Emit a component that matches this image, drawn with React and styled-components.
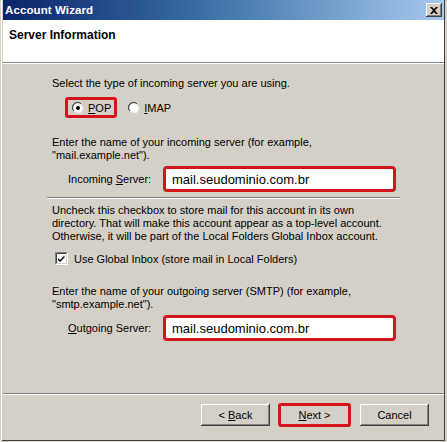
import React from 'react';
import styled, { createGlobalStyle } from 'styled-components';

const Global = createGlobalStyle`
  html, body { margin: 0; padding: 0; background: #d4d0c8; }
  body { font-family: "Liberation Sans", Arial, sans-serif; font-size: 11px; color: #000; }
  * { box-sizing: border-box; }
`;

const RED = '#d3151b';

const Window = styled.div`
  width: 447px;
  height: 442px;
  background: #d4d0c8;
  border-left: 1px solid #d4d0c8;
  border-right: 2px solid #d4d0c8;
  border-bottom: 1px solid #d4d0c8;
  padding-left: 2px;
  padding-right: 1px;
  padding-bottom: 1px;
  box-shadow: inset 1px 0 0 #ffffff, inset -1px -1px 0 #404040;
  display: flex;
  flex-direction: column;
`;

const TitleBar = styled.div`
  height: 20px;
  flex: none;
  background: linear-gradient(to right, #0a246a 0%, #3a6ea5 45%, #a6caf0 100%);
  display: flex;
  align-items: center;
  justify-content: space-between;
  padding: 0 2px 0 2px;
`;

const TitleText = styled.span`
  color: #fff;
  font-weight: bold;
  font-size: 11.5px;
  letter-spacing: 0.1px;
`;

const CloseButton = styled.div`
  width: 16px;
  height: 14px;
  background: #d4d0c8;
  box-shadow: inset -1px -1px 0 #404040, inset 1px 1px 0 #ffffff, inset -2px -2px 0 #808080;
  display: flex;
  align-items: center;
  justify-content: center;
`;

const Header = styled.div`
  height: 43px;
  flex: none;
  background: #fff;
  border-bottom: 1px solid #808080;
  box-shadow: 0 1px 0 #ffffff;
  padding: 8px 0 0 6px;
`;

const HeaderTitle = styled.div`
  font-weight: bold;
  font-size: 12px;
`;

const Body = styled.div`
  flex: 1;
  display: flex;
  flex-direction: column;
  padding: 14px 0 0 44px;
  width: 397px;
`;

const Para = styled.div`
  line-height: 13px;
  padding-left: 5px;
  margin-top: ${p => p.$mt || 0}px;
  white-space: pre-line;
`;

const RadioRow = styled.div`
  display: flex;
  align-items: center;
  height: 21px;
  margin-top: 7px;
  margin-left: 21px;
`;

const RadioItem = styled.label`
  display: flex;
  align-items: center;
  gap: 4px;
`;

const Highlight = styled.div`
  display: flex;
  align-items: center;
  height: 21px;
  padding: 0 3px 0 4px;
  margin-left: -3px;
  margin-right: 11px;
  border: 3px solid ${RED};
  border-radius: 3px;
`;

const FieldRow = styled.div`
  display: flex;
  align-items: center;
  margin-top: 4px;
  padding-left: 21px;
  height: 26px;
`;

const FieldLabel = styled.span`
  width: 95px;
  flex: none;
`;

const InputBox = styled.div`
  width: 233px;
  height: 26px;
  border: 3px solid ${RED};
  border-radius: 4px;
  background: #fff;
  display: flex;
  align-items: center;
  padding-left: 6px;
  font-size: 13px;
`;

const Separator = styled.div`
  margin-top: ${p => p.$mt || 0}px;
  height: 2px;
  border-top: 1px solid #808080;
  border-bottom: 1px solid #ffffff;
  width: ${p => (p.$w ? p.$w + 'px' : 'auto')};
`;

const CheckRow = styled.div`
  display: flex;
  align-items: center;
  gap: 6px;
  margin-top: 9px;
  padding-left: 8px;
  height: 13px;
`;

const Spacer = styled.div`
  flex: 1;
`;

const Footer = styled.div`
  flex: none;
  height: 47px;
  display: flex;
  flex-direction: column;
`;

const ButtonRow = styled.div`
  display: flex;
  justify-content: flex-end;
  align-items: center;
  padding: 8px 15px 0 0;
  gap: 8px;
`;

const Button = styled.div`
  width: ${p => (p.$hl ? 73 : 69)}px;
  height: ${p => (p.$hl ? 24 : 22)}px;
  margin-left: ${p => p.$ml || 0}px;
  background: #d4d0c8;
  display: flex;
  align-items: center;
  justify-content: center;
  white-space: pre;
  ${p => (p.$hl
    ? `border: 3px solid ${RED}; border-radius: 3px;`
    : `box-shadow: inset -1px -1px 0 #404040, inset 1px 1px 0 #ffffff, inset -2px -2px 0 #808080;`)}
`;

const Radio = ({ checked }) => (
  <svg width="12" height="12" viewBox="0 0 12 12">
    <path d="M1 8 A5.5 5.5 0 0 1 8 1" stroke="#808080" fill="none" />
    <path d="M1.8 9 A4.6 4.6 0 0 1 9 1.8" stroke="#404040" fill="none" />
    <circle cx="6" cy="6" r="4.5" fill="#fff" />
    <path d="M11 4 A5.5 5.5 0 0 1 4 11" stroke="#ffffff" fill="none" />
    <path d="M10.2 3 A4.6 4.6 0 0 1 3 10.2" stroke="#d4d0c8" fill="none" />
    {checked && <circle cx="6" cy="6" r="2" fill="#000" />}
  </svg>
);

const CheckBox = () => (
  <svg width="13" height="13" viewBox="0 0 13 13">
    <rect x="0" y="0" width="13" height="13" fill="#ffffff" />
    <path d="M0.5 12.5 V0.5 H12.5" stroke="#808080" fill="none" />
    <path d="M1.5 11.5 V1.5 H11.5" stroke="#404040" fill="none" />
    <path d="M1.5 11.5 H11.5 V1.5" stroke="#d4d0c8" fill="none" />
    <path d="M3 6 L5 8 L9.5 3.5 V5.5 L5 10 L3 8 Z" fill="#000" />
  </svg>
);

export default function App() {
  return (
    <>
      <Global />
      <Window>
        <TitleBar>
          <TitleText>Account Wizard</TitleText>
          <CloseButton>
            <svg width="8" height="7" viewBox="0 0 8 7">
              <path d="M0 0 H2 L4 2 L6 0 H8 L5 3.5 L8 7 H6 L4 5 L2 7 H0 L3 3.5 Z" fill="#000" />
            </svg>
          </CloseButton>
        </TitleBar>
        <Header>
          <HeaderTitle>Server Information</HeaderTitle>
        </Header>
        <Body>
          <Para>Select the type of incoming server you are using.</Para>
          <RadioRow>
            <Highlight>
              <RadioItem>
                <Radio checked />
                <span><u>P</u>OP</span>
              </RadioItem>
            </Highlight>
            <RadioItem>
              <Radio />
              <span><u>I</u>MAP</span>
            </RadioItem>
          </RadioRow>
          <Para $mt={18}>{'Enter the name of your incoming server (for example,\n"mail.example.net").'}</Para>
          <FieldRow>
            <FieldLabel>Incoming <u>S</u>erver:</FieldLabel>
            <InputBox>mail.seudominio.com.br</InputBox>
          </FieldRow>
          <Separator $mt={5} $w={353} />
          <Para $mt={5}>{'Uncheck this checkbox to store mail for this account in its own\ndirectory. That will make this account appear as a top-level account.\nOtherwise, it will be part of the Local Folders Global Inbox account.'}</Para>
          <CheckRow>
            <CheckBox />
            <span>Use Global Inbox (store mail in Local Folders)</span>
          </CheckRow>
          <Para $mt={20}>{'Enter the name of your outgoing server (SMTP) (for example,\n"smtp.example.net").'}</Para>
          <FieldRow>
            <FieldLabel><u>O</u>utgoing Server:</FieldLabel>
            <InputBox>mail.seudominio.com.br</InputBox>
          </FieldRow>
          <Spacer />
        </Body>
        <Footer>
          <Separator />
          <ButtonRow>
            <Button><span>&lt; <u>B</u>ack</span></Button>
            <Button $hl><span><u>N</u>ext &gt;</span></Button>
            <Button $ml={1}>Cancel</Button>
          </ButtonRow>
        </Footer>
      </Window>
    </>
  );
}
